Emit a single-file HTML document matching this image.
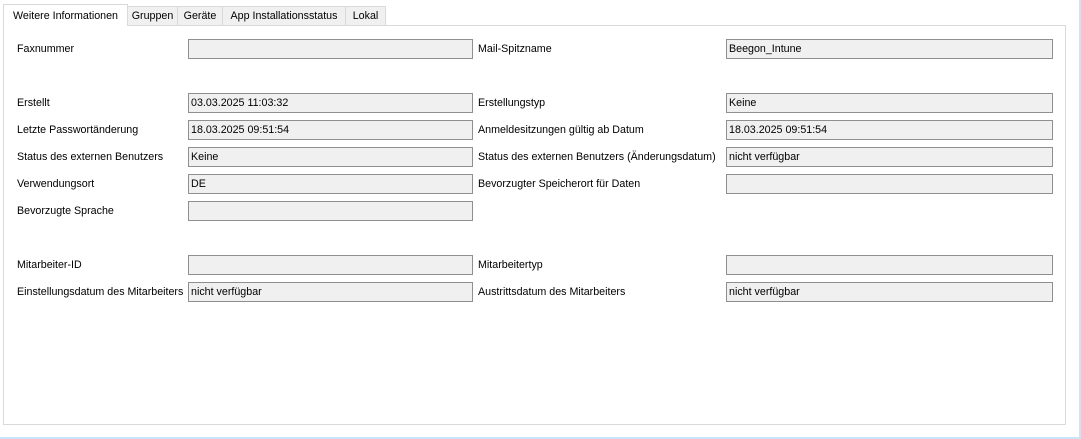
<!DOCTYPE html>
<html><head><meta charset="utf-8"><style>
body{margin:0;width:1081px;height:439px;background:#fff;font-family:"Liberation Sans",sans-serif;font-size:10.7px;color:#000;position:relative;overflow:hidden}
.outer{position:absolute;left:0;top:0;width:1079px;height:437px;border-right:2px solid #cce4f7;border-bottom:2px solid #cce4f7;box-sizing:content-box}
.panel{position:absolute;left:3px;top:25px;width:1061px;height:398px;border:1px solid #d9d9d9;background:#fff}
.tab{position:absolute;top:6px;height:19px;background:#f0f0f0;border:1px solid #d9d9d9;border-bottom:none;line-height:19px;text-align:center;box-sizing:border-box}
.tab.act{top:4px;height:22px;background:#fff;z-index:2;line-height:22px}
.l{position:absolute;line-height:20px;white-space:nowrap}
.i{position:absolute;height:20px;box-sizing:border-box;border:1px solid #8f8f8f;background:#f0f0f0;padding-left:2px;line-height:18px;white-space:nowrap}
.a{left:188px;width:285px}.b{left:726px;width:327px}
</style></head><body>
<div class="outer"></div>
<div class="panel"></div>
<div class="tab act" style="left:3px;width:125px">Weitere Informationen</div>
<div class="tab" style="left:127px;width:51px">Gruppen</div>
<div class="tab" style="left:177px;width:46px">Geräte</div>
<div class="tab" style="left:222px;width:124px">App Installationsstatus</div>
<div class="tab" style="left:345px;width:41px">Lokal</div>

<div class="l" style="left:17px;top:39px">Faxnummer</div><div class="i a" style="top:39px"></div>
<div class="l" style="left:478px;top:39px">Mail-Spitzname</div><div class="i b" style="top:39px">Beegon_Intune</div>

<div class="l" style="left:17px;top:93px">Erstellt</div><div class="i a" style="top:93px">03.03.2025 11:03:32</div>
<div class="l" style="left:478px;top:93px">Erstellungstyp</div><div class="i b" style="top:93px">Keine</div>

<div class="l" style="left:17px;top:120px">Letzte Passwortänderung</div><div class="i a" style="top:120px">18.03.2025 09:51:54</div>
<div class="l" style="left:478px;top:120px">Anmeldesitzungen gültig ab Datum</div><div class="i b" style="top:120px">18.03.2025 09:51:54</div>

<div class="l" style="left:17px;top:147px">Status des externen Benutzers</div><div class="i a" style="top:147px">Keine</div>
<div class="l" style="left:478px;top:147px">Status des externen Benutzers (Änderungsdatum)</div><div class="i b" style="top:147px">nicht verfügbar</div>

<div class="l" style="left:17px;top:174px">Verwendungsort</div><div class="i a" style="top:174px">DE</div>
<div class="l" style="left:478px;top:174px">Bevorzugter Speicherort für Daten</div><div class="i b" style="top:174px"></div>

<div class="l" style="left:17px;top:201px">Bevorzugte Sprache</div><div class="i a" style="top:201px"></div>

<div class="l" style="left:17px;top:255px">Mitarbeiter-ID</div><div class="i a" style="top:255px"></div>
<div class="l" style="left:478px;top:255px">Mitarbeitertyp</div><div class="i b" style="top:255px"></div>

<div class="l" style="left:17px;top:282px">Einstellungsdatum des Mitarbeiters</div><div class="i a" style="top:282px">nicht verfügbar</div>
<div class="l" style="left:478px;top:282px">Austrittsdatum des Mitarbeiters</div><div class="i b" style="top:282px">nicht verfügbar</div>
</body></html>
